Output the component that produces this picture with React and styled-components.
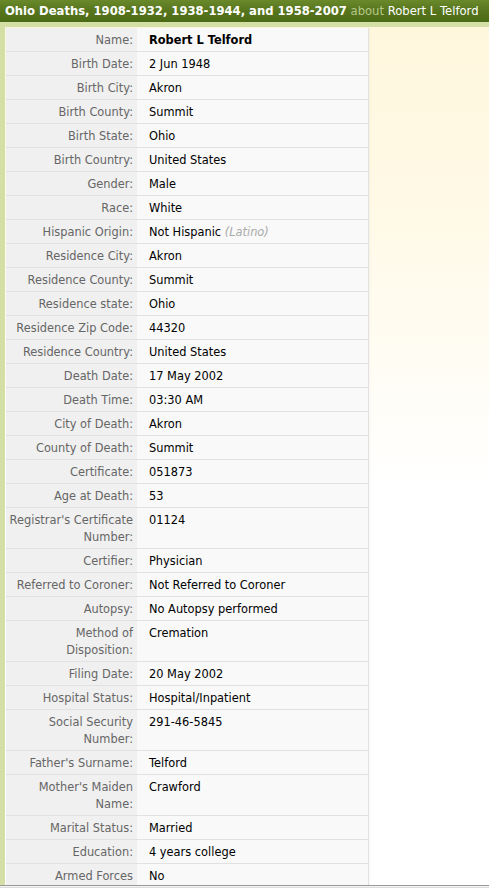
import React from "react";
import styled, { createGlobalStyle } from "styled-components";

const Global = createGlobalStyle`
  html, body { margin: 0; padding: 0; background: #fff; }
  body { font-family: "DejaVu Sans", Verdana, sans-serif; }
`;

const Page = styled.div`
  width: 489px;
  overflow: hidden;
`;

const Header = styled.div`
  height: 22px;
  background: linear-gradient(#6a892b, #56751d 50%, #4b6a14);
  color: #fff;
  font-size: 11.6px;
  line-height: 23px;
  padding-left: 5px;
  white-space: nowrap;
  overflow: hidden;
`;

const Title = styled.span`
  font-weight: bold;
`;

const About = styled.span`
  color: #b7c88b;
`;

const Body = styled.div`
  border-top: 5px solid #d4dfa6;
  border-left: 5px solid #d4dfa6;
  padding: 1px 0 0 1px;
  background: linear-gradient(#fff7dd 0, #fff9e6 180px, #ffffff 460px);
  display: flex;
`;

const Record = styled.div`
  width: 362px;
  border-right: 1px solid #e2e2e2;
  box-shadow: 1px 0 2px rgba(0, 0, 0, 0.04);
  font-size: 11.4px;
  line-height: 17px;
`;

const Row = styled.div`
  display: grid;
  grid-template-columns: 131px 1fr;
  border-bottom: ${(p) => (p.$last ? "none" : "1px solid #e1e1e1")};
`;

const Label = styled.div`
  background: #f0f0f0;
  color: #666;
  text-align: right;
  padding: ${(p) => (p.$last ? "4px 4px 0 3px" : "4px 4px 2px 3px")};
`;

const Value = styled.div`
  background: #f9f9f9;
  color: #000;
  padding: ${(p) => (p.$last ? "4px 8px 0 12px" : "4px 8px 2px 12px")};
  font-weight: ${(p) => (p.$bold ? "bold" : "normal")};
`;

const Note = styled.span`
  color: #aaa;
  font-style: italic;
`;

const BottomEdge = styled.div`
  border-top: 1px solid #9a9a9a;
  border-bottom: 1px solid #dcdcdc;
  height: 1px;
  background: #f4f4f4;
`;

const Spacer = styled.div`
  height: 20px;
  background: #fff;
`;

const rows = [
  ["Name:", "Robert L Telford", true],
  ["Birth Date:", "2 Jun 1948"],
  ["Birth City:", "Akron"],
  ["Birth County:", "Summit"],
  ["Birth State:", "Ohio"],
  ["Birth Country:", "United States"],
  ["Gender:", "Male"],
  ["Race:", "White"],
  ["Hispanic Origin:", "HISPANIC"],
  ["Residence City:", "Akron"],
  ["Residence County:", "Summit"],
  ["Residence state:", "Ohio"],
  ["Residence Zip Code:", "44320"],
  ["Residence Country:", "United States"],
  ["Death Date:", "17 May 2002"],
  ["Death Time:", "03:30 AM"],
  ["City of Death:", "Akron"],
  ["County of Death:", "Summit"],
  ["Certificate:", "051873"],
  ["Age at Death:", "53"],
  ["Registrar's Certificate Number:", "01124"],
  ["Certifier:", "Physician"],
  ["Referred to Coroner:", "Not Referred to Coroner"],
  ["Autopsy:", "No Autopsy performed"],
  ["Method of Disposition:", "Cremation"],
  ["Filing Date:", "20 May 2002"],
  ["Hospital Status:", "Hospital/Inpatient"],
  ["Social Security Number:", "291-46-5845"],
  ["Father's Surname:", "Telford"],
  ["Mother's Maiden Name:", "Crawford"],
  ["Marital Status:", "Married"],
  ["Education:", "4 years college"],
  ["Armed Forces", "No"],
];

export default function App() {
  return (
    <Page>
      <Global />
      <Header>
        <Title>Ohio Deaths, 1908-1932, 1938-1944, and 1958-2007</Title>{" "}
        <About>about</About> Robert L Telford
      </Header>
      <Body>
        <Record>
          {rows.map(([label, value, bold], i) => {
            const last = i === rows.length - 1;
            return (
              <Row key={label} $last={last}>
                <Label $last={last}>{label}</Label>
                <Value $bold={bold} $last={last}>
                  {value === "HISPANIC" ? (
                    <>
                      Not Hispanic <Note>(Latino)</Note>
                    </>
                  ) : (
                    value
                  )}
                </Value>
              </Row>
            );
          })}
        </Record>
      </Body>
      <BottomEdge />
      <Spacer />
    </Page>
  );
}
